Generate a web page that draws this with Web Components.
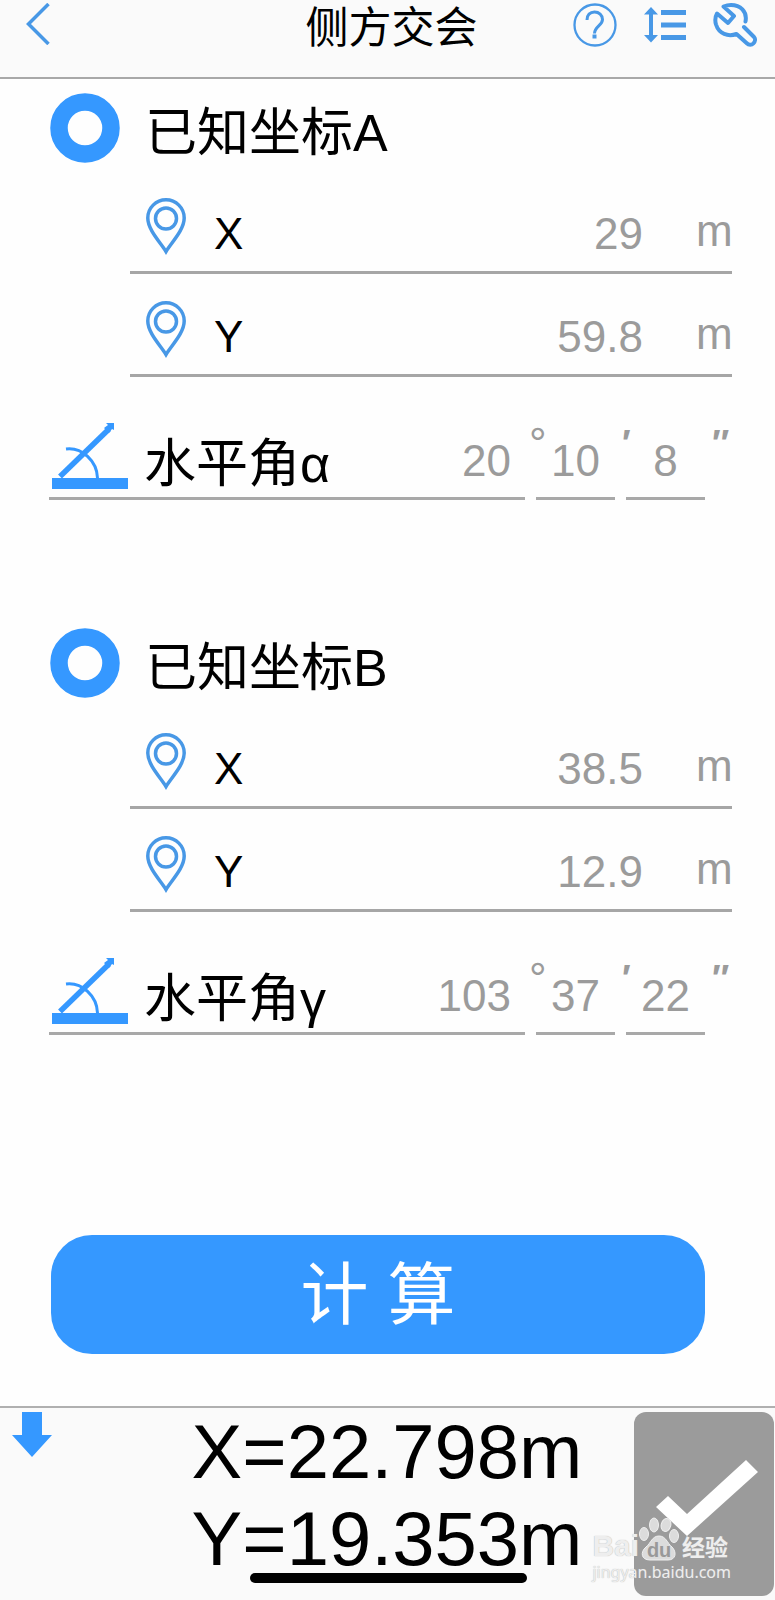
<!DOCTYPE html>
<html lang="zh-CN">
<head>
<meta charset="utf-8">
<meta name="viewport" content="width=device-width, initial-scale=1">
<title>侧方交会</title>
<style>
    body {
        margin: 0;
        background: #fefefe;
        color: #000;
        font-family: "Liberation Sans", "Noto Sans CJK SC", sans-serif;
        --blue: #3598ff;
        --icon: #4898e6;
        --gray: #9b9b9b;
        --bar: #fafafa;
    }
</style>
</head>
<body>
<intersection-page></intersection-page>

<script>
const ICONS = {
    back: `<svg viewBox="0 0 24 42" width="24" height="42"><path d="M22.500 1 2.500 21 22.500 41" fill="none" stroke="currentColor" stroke-width="3.500"/></svg>`,
    help: `<svg viewBox="0 0 44 44" width="44" height="44" fill="none" stroke="currentColor">
        <circle cx="22" cy="22" r="20.500" stroke-width="2.300"/>
        <path d="M14 17c0-5 3-8 7.500-8s8 3 8 7.500c0 6-8 7-8 14" stroke-width="3"/>
        <path d="M19.500 33.500h4" stroke-width="4"/></svg>`,
    list: `<svg viewBox="0 0 44 44" width="44" height="44" fill="currentColor">
        <path d="M8 4 15 11.500H10V32h5L8 39.500 1 32H6V11.500H1z"/>
        <path d="M18 7h25v5H18zM18 19.500h25v5H18zM18 32h25v5H18z"/></svg>`,
    wrench: `<svg viewBox="0 0 44 44" width="44" height="44" fill="none" stroke="currentColor" stroke-width="4" stroke-linecap="round" stroke-linejoin="round">
        <path d="M32.500 18.500C34.500 8 27 2 18 2c-3 0-5 .5-7.500 1.500L21 13l-6 7L4 10.500C2 14 2 18 3 21.500c3 9.500 12 12.500 20.500 9.500L33.500 40c5 5 11-2 7.500-6L31 24"/></svg>`,
    dot: `<svg viewBox="0 0 70 70" width="70" height="70"><circle cx="35" cy="35" r="26" fill="none" stroke="#3598ff" stroke-width="17.500"/></svg>`,
    pin: `<svg viewBox="0 0 40 57" width="40" height="57" fill="none" stroke="currentColor">
        <path d="M20 53.500C15 45 1.800 32 1.800 20a18.200 18.200 0 0 1 36.400 0C38.200 32 25 45 20 53.500z" stroke-width="3.500"/>
        <circle cx="20" cy="20.500" r="10.500" stroke-width="3.500"/></svg>`,
    angle: `<svg viewBox="0 0 76 68" width="76" height="68">
        <path d="M0 56h76v11H0z" fill="#3598ff"/>
        <path d="M8 54.500 57 7" fill="none" stroke="#3598ff" stroke-width="5.500"/>
        <path d="M54 1h8v7l-2-1-3 4-5-5 4-3z" fill="#3598ff"/>
        <path d="M14 27c16-2 31 12 31.500 29" fill="none" stroke="#3598ff" stroke-width="3"/></svg>`,
    down: `<svg viewBox="0 0 40 45" width="40" height="45"><path d="M10 0h20v23h10L20 45 0 23h10z" fill="#3598ff"/></svg>`,
    check: `<svg viewBox="0 0 102 76" width="102" height="76"><path d="M0 47 12 36 31 54 90 0l12 12L31 76z" fill="#fff"/></svg>`,
    paw: `<svg viewBox="0 0 40 44" width="40" height="44" fill="#dcdcdc" stroke="#f0f0f0">
        <ellipse cx="5" cy="17" rx="4.500" ry="6.500"/>
        <ellipse cx="15" cy="8" rx="4.500" ry="7"/>
        <ellipse cx="27" cy="8" rx="4.800" ry="6.500" transform="rotate(15 27 8)"/>
        <ellipse cx="35" cy="19" rx="4.500" ry="6.500"/>
        <path d="M20 19c7 0 8 7 13 11 5 5 4 13-4 13H11c-9 0-10-8-4-13 5-4 6-11 13-11z"/></svg>`
};

class UiIcon extends HTMLElement {
    connectedCallback() {
        const root = this.attachShadow({ mode: 'open' });
        root.innerHTML = `
            <style>
                :host { display: block; flex: none; color: var(--icon); }
                svg { display: block; }
            </style>
            ${ICONS[this.getAttribute('name')]}
        `;
    }
}

class AppHeader extends HTMLElement {
    connectedCallback() {
        const root = this.attachShadow({ mode: 'open' });
        root.innerHTML = `
            <style>
                :host {
                    display: grid;
                    grid-template-columns: 1fr auto 1fr;
                    align-items: start;
                    padding: 3px 18px 24px 26px;
                    background: var(--bar);
                    border-bottom: 2px solid #a8a8a8;
                }
                h1 {
                    margin: 0;
                    font-size: 43px;
                    font-weight: 400;
                    line-height: 50px;
                }
                button {
                    padding: 0;
                    border: 0;
                    background: none;
                }
                nav {
                    display: flex;
                    justify-content: flex-end;
                    gap: 26px;
                }
                .back { justify-self: start; }
            </style>
            <button class="back" aria-label="返回"><ui-icon name="back"></ui-icon></button>
            <h1><slot></slot></h1>
            <nav>
                <button aria-label="帮助"><ui-icon name="help"></ui-icon></button>
                <button aria-label="列表"><ui-icon name="list"></ui-icon></button>
                <button aria-label="设置"><ui-icon name="wrench"></ui-icon></button>
            </nav>
        `;
    }
}

class KnownPoint extends HTMLElement {
    connectedCallback() {
        const root = this.attachShadow({ mode: 'open' });
        root.innerHTML = `
            <style>
                :host { display: block; }
                header {
                    display: flex;
                    align-items: flex-end;
                    gap: 25px;
                    padding: 14px 43px 8px 50px;
                }
                h2 {
                    margin: 0;
                    font-size: 52px;
                    font-weight: 400;
                    line-height: 60px;
                }
            </style>
            <header>
                <ui-icon name="dot"></ui-icon>
                <h2>${this.getAttribute('heading')}</h2>
            </header>
            <slot></slot>
        `;
    }
}

class CoordField extends HTMLElement {
    connectedCallback() {
        const root = this.attachShadow({ mode: 'open' });
        root.innerHTML = `
            <style>
                :host {
                    display: flex;
                    align-items: flex-end;
                    box-sizing: border-box;
                    height: 103px;
                    margin: 0 43px 0 130px;
                    padding: 0 0 11px 16px;
                    border-bottom: 3px solid #a6a6a6;
                    font-size: 44px;
                    line-height: 52px;
                }
                ui-icon { margin: 0 28px 5px 0; }
                input {
                    flex: 1;
                    min-width: 0;
                    height: 52px;
                    margin: 0 0 0 24px;
                    padding: 0;
                    border: 0;
                    background: none;
                    color: var(--gray);
                    font: inherit;
                    text-align: right;
                }
                .unit {
                    width: 36px;
                    margin: 0 0 3px 53px;
                    color: var(--gray);
                }
            </style>
            <ui-icon name="pin"></ui-icon>
            <label for="value">${this.getAttribute('label')}</label>
            <input id="value" type="text" inputmode="decimal" value="${this.getAttribute('value')}">
            <span class="unit">m</span>
        `;
    }
}

class AngleField extends HTMLElement {
    connectedCallback() {
        const [deg, min, sec] = this.getAttribute('value').split(' ');
        const root = this.attachShadow({ mode: 'open' });
        root.innerHTML = `
            <style>
                :host {
                    display: flex;
                    height: 123px;
                    margin: 0 59px 0 49px;
                    align-items: flex-end;
                    font-size: 44px;
                    line-height: 52px;
                }
                .cell {
                    display: flex;
                    align-items: flex-end;
                    box-sizing: border-box;
                    width: 79px;
                    border-bottom: 3px solid #a8a8a8;
                }
                .degrees {
                    flex: 1;
                    min-width: 0;
                    padding: 0 14px 0 3px;
                }
                ui-icon { margin: 0 16px 7px 0; }
                label {
                    margin-bottom: 3px;
                    font-size: 52px;
                    line-height: 60px;
                    white-space: nowrap;
                }
                input {
                    flex: 1;
                    min-width: 0;
                    height: 52px;
                    margin: 0 0 10px;
                    padding: 0;
                    border: 0;
                    background: none;
                    color: var(--gray);
                    font: inherit;
                    text-align: center;
                }
                .degrees input { text-align: right; }
                .mark {
                    width: 11px;
                    margin-bottom: 30px;
                    color: var(--gray);
                    text-indent: 4px;
                    white-space: nowrap;
                }
                .prime {
                    font-size: 36px;
                    font-weight: 700;
                    text-indent: 7px;
                }
            </style>
            <div class="cell degrees">
                <ui-icon name="angle"></ui-icon>
                <label for="deg">${this.getAttribute('label')}</label>
                <input id="deg" type="text" inputmode="numeric" value="${deg}">
            </div>
            <span class="mark">°</span>
            <div class="cell"><input type="text" inputmode="numeric" aria-label="分" value="${min}"></div>
            <span class="mark prime">′</span>
            <div class="cell"><input type="text" inputmode="numeric" aria-label="秒" value="${sec}"></div>
            <span class="mark prime">″</span>
        `;
    }
}

class CalcButton extends HTMLElement {
    connectedCallback() {
        const root = this.attachShadow({ mode: 'open' });
        root.innerHTML = `
            <style>
                :host { display: block; }
                button {
                    display: block;
                    width: 100%;
                    padding: 15px 0 14px;
                    border: 0;
                    border-radius: 41px;
                    background: var(--blue);
                    color: #fff;
                    font-family: inherit;
                    font-size: 68px;
                    line-height: 90px;
                }
            </style>
            <button><slot></slot></button>
        `;
    }
}

class SiteMark extends HTMLElement {
    connectedCallback() {
        const root = this.attachShadow({ mode: 'open' });
        root.innerHTML = `
            <style>
                :host {
                    display: block;
                    color: #eee;
                    text-shadow: 0 0 1px #aaa;
                    pointer-events: none;
                }
                .brand {
                    display: flex;
                    align-items: flex-end;
                    height: 44px;
                    font-size: 30px;
                    font-weight: 700;
                    line-height: 30px;
                }
                .cn {
                    margin-left: 3px;
                    font-family: "Noto Sans CJK SC", sans-serif;
                    font-size: 23px;
                }
                .paw { position: relative; }
                .paw span {
                    position: absolute;
                    left: 0;
                    right: 0;
                    bottom: 0;
                    color: #999;
                    font-size: 20px;
                    line-height: 22px;
                    text-align: center;
                    text-shadow: none;
                }
                .site {
                    font-family: "Noto Sans", sans-serif;
                    font-size: 16px;
                    line-height: 22px;
                }
            </style>
            <div class="brand">
                <span>Bai</span>
                <div class="paw"><ui-icon name="paw"></ui-icon><span>du</span></div>
                <span class="cn">经验</span>
            </div>
            <div class="site">jingyan.baidu.com</div>
        `;
    }
}

class ResultBar extends HTMLElement {
    connectedCallback() {
        const root = this.attachShadow({ mode: 'open' });
        root.innerHTML = `
            <style>
                :host {
                    display: grid;
                    grid-template-columns: 140px 1fr 140px;
                    align-items: start;
                    position: relative;
                    padding: 4px 1px 4px 0;
                    border-top: 2px solid #b0b0b0;
                    background: var(--bar);
                }
                button {
                    padding: 0;
                    border: 0;
                    background: none;
                }
                .save {
                    justify-self: start;
                    margin-left: 12px;
                }
                output {
                    display: block;
                    margin-top: -4px;
                    font-size: 76px;
                    line-height: 87px;
                    text-align: center;
                    white-space: nowrap;
                }
                .done {
                    display: grid;
                    place-items: center;
                    height: 184px;
                    padding: 0 0 12px 6px;
                    border-radius: 12px;
                    background: var(--gray);
                }
                .home {
                    position: absolute;
                    left: 50%;
                    bottom: 17px;
                    width: 277px;
                    height: 10px;
                    margin-left: -138px;
                    border-radius: 5px;
                    background: #000;
                }
                site-mark {
                    position: absolute;
                    right: 44px;
                    bottom: 17px;
                }
            </style>
            <button class="save" aria-label="收起"><ui-icon name="down"></ui-icon></button>
            <output>
                <div>X=${this.getAttribute('x')}m</div>
                <div>Y=${this.getAttribute('y')}m</div>
            </output>
            <button class="done" aria-label="完成"><ui-icon name="check"></ui-icon></button>
            <div class="home"></div>
            <site-mark></site-mark>
        `;
    }
}

class IntersectionPage extends HTMLElement {
    connectedCallback() {
        const root = this.attachShadow({ mode: 'open' });
        root.innerHTML = `
            <style>
                :host {
                    display: flex;
                    flex-direction: column;
                    min-height: 100vh;
                }
                main {
                    display: flex;
                    flex-direction: column;
                    flex: 1;
                    gap: 114px;
                    padding-bottom: 52px;
                }
                calc-button { margin: 86px 70px 0 51px; }
            </style>
            <app-header>侧方交会</app-header>
            <main>
                <known-point heading="已知坐标A">
                    <coord-field label="X" value="29"></coord-field>
                    <coord-field label="Y" value="59.8"></coord-field>
                    <angle-field label="水平角α" value="20 10 8"></angle-field>
                </known-point>
                <known-point heading="已知坐标B">
                    <coord-field label="X" value="38.5"></coord-field>
                    <coord-field label="Y" value="12.9"></coord-field>
                    <angle-field label="水平角γ" value="103 37 22"></angle-field>
                </known-point>
                <calc-button>计 算</calc-button>
            </main>
            <result-bar x="22.798" y="19.353"></result-bar>
        `;
    }
}

customElements.define('ui-icon', UiIcon);
customElements.define('app-header', AppHeader);
customElements.define('known-point', KnownPoint);
customElements.define('coord-field', CoordField);
customElements.define('angle-field', AngleField);
customElements.define('calc-button', CalcButton);
customElements.define('site-mark', SiteMark);
customElements.define('result-bar', ResultBar);
customElements.define('intersection-page', IntersectionPage);
</script>
</body>
</html>
